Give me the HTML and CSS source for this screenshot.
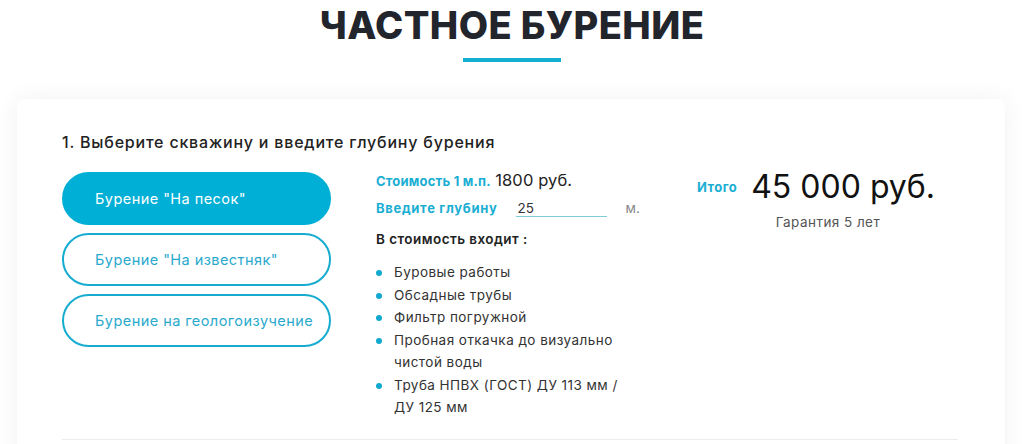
FILE: index.html
```
<!DOCTYPE html>
<html lang="ru">
<head>
<meta charset="utf-8">
<link rel="stylesheet" href="styles.css">
</head>
<body>
<div class="page">
  <h1 class="title">ЧАСТНОЕ БУРЕНИЕ</h1>
  <div class="title-line"></div>
  <div class="card">
    <h2 class="step">1. Выберите скважину и введите глубину бурения</h2>
    <div class="cols">
      <div class="types">
        <button class="type active">Бурение "На песок"</button>
        <button class="type">Бурение "На известняк"</button>
        <button class="type">Бурение на геологоизучение</button>
      </div>
      <div class="details">
        <div class="price-row"><span class="lbl lbl-price">Стоимость 1 м.п.</span> <span class="price">1800 руб.</span></div>
        <div class="depth-row"><span class="lbl lbl-depth">Введите глубину</span><span class="input">25</span><span class="unit">м.</span></div>
        <div class="incl">В стоимость входит :</div>
        <ul class="list">
          <li>Буровые работы</li>
          <li>Обсадные трубы</li>
          <li>Фильтр погружной</li>
          <li>Пробная откачка до визуально чистой воды</li>
          <li>Труба НПВХ (ГОСТ) ДУ 113 мм / ДУ 125 мм</li>
        </ul>
      </div>
      <div class="total">
        <div class="total-row"><span class="lbl">Итого</span><span class="sum">45 000 руб.</span></div>
        <div class="guarantee">Гарантия 5 лет</div>
      </div>
    </div>
    <div class="sep"></div>
  </div>
</div>
</body>
</html>
```
FILE: styles.css
```
* { box-sizing: border-box; }
html, body { margin: 0; padding: 0; background: #ffffff; }
body { font-family: "Inter", "Noto Sans", sans-serif; color: #222; overflow: hidden; height: 444px; }
.page { display: flex; flex-direction: column; align-items: center; }
.title {
  margin: 2px 0 0;
  font-size: 38px;
  font-weight: 800;
  letter-spacing: 0.4px;
  color: #23252d;
  line-height: 46px;
}
.title-line { width: 98px; height: 4px; background: #14b0d2; margin-top: 10px; }
.card {
  align-self: flex-start;
  margin: 37px 0 0 17px;
  width: 988px;
  background: #fff;
  border-radius: 8px;
  box-shadow: 0 0 24px rgba(0,0,0,0.06);
  padding: 31px 45px 0 45px;
  height: 400px;
}
.step { margin: 0; font-size: 16px; font-weight: 500; letter-spacing: 0.8px; color: #222; line-height: 24px; }
.cols { display: flex; margin-top: 18px; }
.types { width: 269px; display: flex; flex-direction: column; gap: 8px; flex: none; }
.type {
  height: 53px;
  border-radius: 27px;
  border: 2px solid #16acd0;
  background: #fff;
  color: #2aa9cd;
  font-family: inherit;
  font-size: 14.5px;
  letter-spacing: 0.45px;
  text-align: left;
  padding: 0 0 0 31px;
}
.type.active { background: #00afd6; border-color: #00afd6; color: #fff; }
.details { margin-left: 45px; width: 262px; flex: none; }
.lbl { color: #1aaed3; font-weight: 700; font-size: 13px; letter-spacing: 0.45px; white-space: nowrap; flex: none; }
.lbl-price { letter-spacing: 0.2px; }
.lbl-depth { letter-spacing: 0.7px; }
.price-row { line-height: 18px; margin-top: -1px; white-space: nowrap; }
.price { font-size: 16.5px; color: #222; letter-spacing: 0.1px; }
.depth-row { display: flex; align-items: baseline; margin-top: 9px; line-height: 18px; white-space: nowrap; }
.input { width: 91px; flex: none; margin-left: 18px; border-bottom: 1.5px solid #7ccfda; font-size: 13.5px; color: #333; padding-left: 2px; line-height: 16px; }
.unit { margin-left: 19px; flex: none; font-size: 13.5px; color: #888; }
.incl { margin-top: 13px; font-size: 13.5px; font-weight: 600; letter-spacing: 0.45px; color: #222; line-height: 18px; }
.list { list-style: none; margin: 13px 0 0; padding: 0; }
.list li { position: relative; padding-left: 18px; font-size: 13.5px; letter-spacing: 0.45px; line-height: 22.5px; color: #333; }
.list li::before { content: ""; position: absolute; left: 0; top: 9px; width: 6px; height: 6px; border-radius: 50%; background: #11a9d0; }
.total { margin-left: 59px; display: flex; flex-direction: column; align-items: center; }
.total-row { display: flex; align-items: center; gap: 14px; margin-top: -3px; }
.sum { font-size: 32px; color: #111; line-height: 36px; }
.guarantee { font-size: 13.5px; letter-spacing: 0.45px; color: #555; margin-top: 9px; margin-left: 24px; }
.sep { height: 1px; background: #ececec; margin-top: 20px; width: 896px; }
```
